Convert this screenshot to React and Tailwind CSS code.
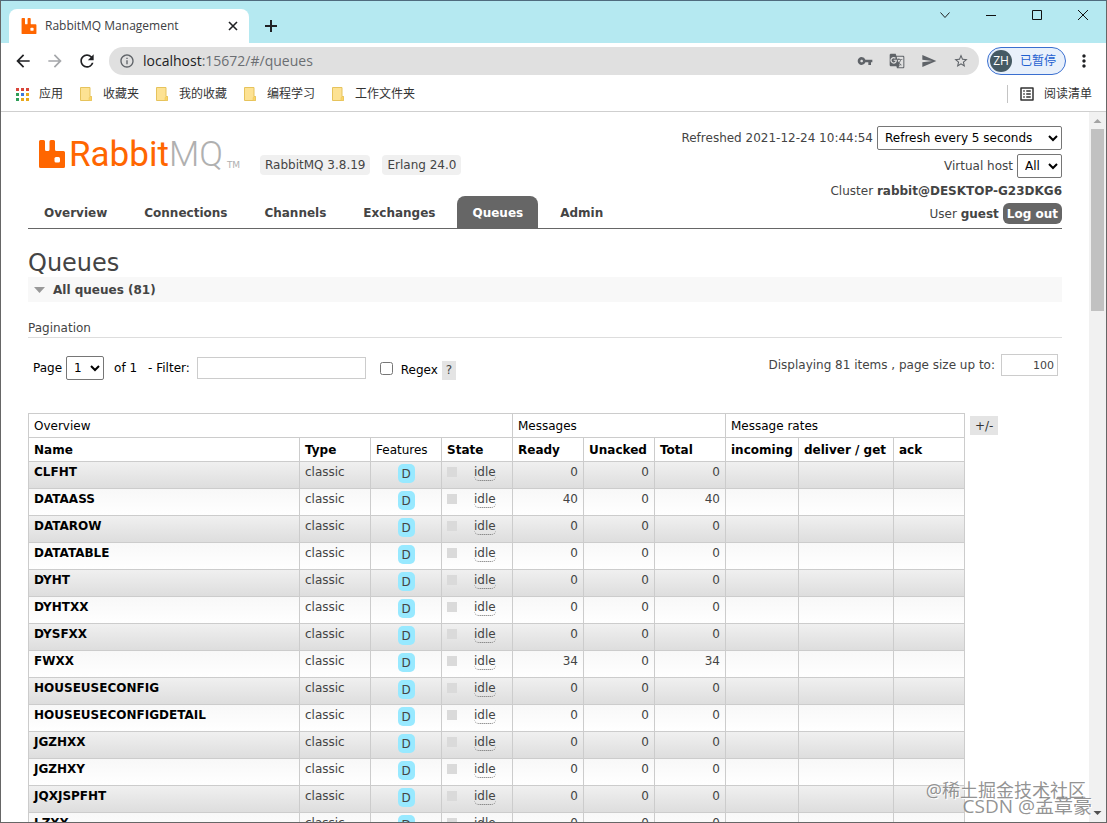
import React, { useState } from 'react';
import {
  MdArrowBack,
  MdArrowForward,
  MdGTranslate,
  MdInfoOutline,
  MdMoreVert,
  MdOutlineListAlt,
  MdRefresh,
  MdSend,
  MdStarBorder,
  MdVpnKey,
} from 'react-icons/md';

const bookmarks = ['收藏夹', '我的收藏', '编程学习', '工作文件夹'];

const navItems = ['Overview', 'Connections', 'Channels', 'Exchanges', 'Queues', 'Admin'];

const queues = [
  { name: 'CLFHT', ready: 0, unacked: 0 },
  { name: 'DATAASS', ready: 40, unacked: 0 },
  { name: 'DATAROW', ready: 0, unacked: 0 },
  { name: 'DATATABLE', ready: 0, unacked: 0 },
  { name: 'DYHT', ready: 0, unacked: 0 },
  { name: 'DYHTXX', ready: 0, unacked: 0 },
  { name: 'DYSFXX', ready: 0, unacked: 0 },
  { name: 'FWXX', ready: 34, unacked: 0 },
  { name: 'HOUSEUSECONFIG', ready: 0, unacked: 0 },
  { name: 'HOUSEUSECONFIGDETAIL', ready: 0, unacked: 0 },
  { name: 'JGZHXX', ready: 0, unacked: 0 },
  { name: 'JGZHXY', ready: 0, unacked: 0 },
  { name: 'JQXJSPFHT', ready: 0, unacked: 0 },
  { name: 'LZXX', ready: 0, unacked: 0 },
];

const appColors = [
  '#d9453a', '#d9453a', '#d9453a',
  '#2f9e58', '#3b78e0', '#e8a81c',
  '#2f9e58', '#e8a81c', '#e8a81c',
];

const RabbitMark = ({ className }) => (
  <svg viewBox="0 0 26 28" className={className} aria-hidden="true">
    <path
      d="M1.5 0h3Q6 0 6 1.500V9.500Q6 11 7.500 11H9Q10.500 11 10.500 9.500V1.500Q10.500 0 12 0h2.500Q16 0 16 1.500V9.500Q16 11 17.500 11H24.500Q26 11 26 12.500V26.500Q26 28 24.500 28H1.500Q0 28 0 26.500V1.500Q0 0 1.500 0Z"
      fill="#ff6600"
    />
    <rect x="15.500" y="17" width="5.500" height="5.500" rx="1.500" fill="#fff" />
  </svg>
);

const Folder = () => (
  <svg viewBox="0 0 12 14" className="w-3 h-3.5" aria-hidden="true">
    <path d="M0.500 0.500H10V9.500H11.500V13.500H0.500Z" fill="#fde293" stroke="#e6c35c" />
    <path d="M9 13.500V10.500L10.500 9.500H11.500V13.500Z" fill="#fbd565" stroke="#e6c35c" strokeWidth="0.500" />
  </svg>
);

const TabStrip = () => (
  <div className="flex h-[42px] shrink-0 justify-between bg-[#b5e9f1]">
    <div className="flex items-end pl-2">
      <div className="flex h-[34px] w-60 items-center rounded-t-lg bg-white pl-3 pr-[9px]">
        <RabbitMark className="h-4 w-4" />
        <span className="ml-2 flex-1 text-xs text-[#3c4043]">RabbitMQ Management</span>
        <button aria-label="Close tab" className="p-0.5">
          <svg viewBox="0 0 10 10" className="h-2.5 w-2.5" stroke="#202124" strokeWidth="1.6">
            <path d="M1 1L9 9M9 1L1 9" />
          </svg>
        </button>
      </div>
      <button aria-label="New tab" className="mb-[11px] ml-4">
        <svg viewBox="0 0 12 12" className="h-3 w-3" stroke="#202124" strokeWidth="2">
          <path d="M6 0V12M0 6H12" />
        </svg>
      </button>
    </div>
    <div className="flex h-7 items-center gap-9 pr-[18px]">
      <button aria-label="Search tabs">
        <svg viewBox="0 0 10 10" className="h-2.5 w-2.5" fill="none" stroke="#222">
          <path d="M0.500 2.500L5 7.500L9.500 2.500" />
        </svg>
      </button>
      <button aria-label="Minimize">
        <svg viewBox="0 0 10 10" className="h-2.5 w-2.5" stroke="#111">
          <path d="M0 5.500H10" />
        </svg>
      </button>
      <button aria-label="Maximize">
        <svg viewBox="0 0 10 10" className="h-2.5 w-2.5" fill="none" stroke="#111">
          <path d="M0.500 0.500H9.500V9.500H0.500Z" />
        </svg>
      </button>
      <button aria-label="Close">
        <svg viewBox="0 0 10 10" className="h-2.5 w-2.5" stroke="#111">
          <path d="M0 0L10 10M10 0L0 10" />
        </svg>
      </button>
    </div>
  </div>
);

const Toolbar = () => (
  <div className="flex h-9 shrink-0 items-center bg-white px-3 text-[#202124]">
    <button aria-label="Back"><MdArrowBack size={20} /></button>
    <button aria-label="Forward" className="ml-3 text-[#a5a7aa]"><MdArrowForward size={20} /></button>
    <button aria-label="Reload" className="ml-3"><MdRefresh size={20} /></button>
    <div className="ml-3 flex h-7 flex-1 items-center rounded-full bg-[#e0e0e0] px-2.5 text-[#5f6368]">
      <MdInfoOutline size={16} />
      <div className="ml-2 flex-1 text-sm text-[#6b6e72]">
        <span className="text-[#202124]">localhost</span>:15672/#/queues
      </div>
      <div className="flex gap-4">
        <button aria-label="Passwords"><MdVpnKey size={16} /></button>
        <button aria-label="Translate"><MdGTranslate size={16} /></button>
        <button aria-label="Send"><MdSend size={16} /></button>
        <button aria-label="Bookmark"><MdStarBorder size={16} /></button>
      </div>
    </div>
    <button className="ml-2 flex h-7 w-[79px] items-center gap-2 rounded-full border border-[#3a6fd0] bg-[#e8f0fb] pl-0.5 text-xs text-[#1f5fd0]">
      <span className="flex h-[22px] w-[22px] items-center justify-center rounded-full bg-[#455a64] text-white">
        ZH
      </span>
      已暂停
    </button>
    <button aria-label="Menu" className="ml-2"><MdMoreVert size={20} /></button>
  </div>
);

const BookmarksBar = () => (
  <div className="flex h-[33px] shrink-0 items-center border-b border-[#cfcfcf] bg-white pb-0.5 pl-[15px] pr-3.5 text-xs text-[#333]">
    <a href="#apps" className="flex items-center gap-2.5">
      <svg viewBox="0 0 13 13" className="h-[13px] w-[13px]" aria-hidden="true">
        {appColors.map((color, i) => (
          <rect key={i} x={(i % 3) * 5} y={Math.floor(i / 3) * 5} width="3" height="3" fill={color} />
        ))}
      </svg>
      应用
    </a>
    {bookmarks.map((name) => (
      <a key={name} href="#bookmark" className="ml-[17px] flex items-center gap-[11px]">
        <Folder />
        {name}
      </a>
    ))}
    <button className="ml-auto flex items-center gap-2 border-l border-[#c4c4c4] pl-2.5">
      <MdOutlineListAlt size={18} />
      阅读清单
    </button>
  </div>
);

const Logo = () => (
  <div className="flex h-8 items-end font-['Roboto',sans-serif] text-[35px] leading-8">
    <RabbitMark className="mb-[3px] h-7 w-[26px]" />
    <span className="ml-1 text-[#ff6600]">Rabbit</span>
    <span className="font-light text-[#b0b0b0]">MQ</span>
    <span className="ml-1 font-['DejaVu_Sans',sans-serif] text-[9px] leading-3 text-[#b0b0b0]">TM</span>
  </div>
);

const Header = () => (
  <header className="border-b border-[#666]">
    <div className="flex items-start justify-between">
      <div>
        <div className="flex items-end pl-[11px] pt-[27px]">
          <div className="w-[206px]">
            <Logo />
          </div>
          <span className="mb-[-4px] ml-[15px] rounded bg-[#f0f0f0] px-[5px] py-0.5 leading-4">RabbitMQ 3.8.19</span>
          <span className="mb-[-4px] ml-3 rounded bg-[#f0f0f0] px-[5px] py-0.5 leading-4">Erlang 24.0</span>
        </div>
        <nav className="mt-[25px] flex gap-[7px] pl-px font-bold">
          {navItems.map((item) => (
            <a
              key={item}
              href={`#/${item.toLowerCase()}`}
              className={
                item === 'Queues'
                  ? 'rounded-t-lg bg-[#666] px-[15px] pb-[7px] pt-[9px] leading-4 text-white'
                  : 'px-[15px] pb-[7px] pt-[9px] leading-4'
              }
            >
              {item}
            </a>
          ))}
        </nav>
      </div>
      <div className="flex flex-col items-end gap-1 pt-3.5">
        <div className="flex items-center gap-1">
          <label htmlFor="refresh">Refreshed 2021-12-24 10:44:54</label>
          <select id="refresh" className="h-6 w-[185px] rounded-xs border border-[#767676] bg-white pl-[3px] text-black">
            <option>Refresh every 5 seconds</option>
            <option>Refresh every 30 seconds</option>
            <option>Do not refresh</option>
          </select>
        </div>
        <div className="flex items-center gap-1">
          <label htmlFor="vhost">Virtual host</label>
          <select id="vhost" className="h-6 w-[45px] rounded-xs border border-[#767676] bg-white pl-[3px] text-black">
            <option>All</option>
            <option>/</option>
          </select>
        </div>
        <div className="pt-px leading-4">Cluster <b>rabbit@DESKTOP-G23DKG6</b></div>
        <div className="flex items-center gap-1">
          <span>User <b>guest</b></span>
          <button className="h-[21px] rounded-md bg-[#666] px-1 font-bold text-white">Log out</button>
        </div>
      </div>
    </div>
  </header>
);

const Pagination = () => {
  const [filter, setFilter] = useState('');
  const [regex, setRegex] = useState(false);

  return (
    <div className="flex justify-between pl-[5px] pr-1 pt-4 text-black">
      <div className="flex h-[26px] items-center pt-0.5">
        <label htmlFor="page">Page</label>
        <select id="page" className="ml-1 h-6 w-[38px] rounded-xs border border-[#767676] bg-white pl-[3px]">
          <option>1</option>
        </select>
        <span className="ml-2.5">of 1</span>
        <label htmlFor="filter" className="ml-[11px]">- Filter:</label>
        <input
          id="filter"
          type="text"
          value={filter}
          onChange={(e) => setFilter(e.target.value)}
          className="ml-[7px] h-[22px] w-[169px] border border-[#ccc] px-1"
        />
        <input
          id="regex"
          type="checkbox"
          checked={regex}
          onChange={(e) => setRegex(e.target.checked)}
          className="ml-3.5 h-[13px] w-[13px]"
        />
        <label htmlFor="regex" className="ml-2 pt-1">Regex</label>
        <button className="ml-1 mt-1 h-[19px] bg-[#e4e4e4] px-1 text-[#444]">?</button>
      </div>
      <div className="flex h-[22px] items-center gap-1.5 text-[#444]">
        <label htmlFor="pagesize">Displaying 81 items , page size up to:</label>
        <input
          id="pagesize"
          type="text"
          defaultValue="100"
          className="h-[22px] w-[57px] border border-[#ccc] px-[3px] text-right text-[11px]"
        />
      </div>
    </div>
  );
};

const QueueRow = ({ queue, shaded }) => {
  const cell = 'border border-[#ccc] px-[5px] pt-0.5 align-top leading-4';
  return (
    <tr className={shaded ? 'h-[27px] bg-linear-to-b from-[#f0f0f0] to-[#dddddd]' : 'h-[27px] bg-linear-to-b from-[#f8f8f8] to-white'}>
      <td className={cell}>
        <a href={`#/queues/%2F/${queue.name}`} className="font-bold text-black">{queue.name}</a>
      </td>
      <td className={cell}>classic</td>
      <td className="border border-[#ccc] pt-0.5 text-center align-top">
        <abbr title="durable: true" className="inline-block h-[19px] w-[17px] rounded-[5px] bg-[#98e9ff] leading-5 no-underline">D</abbr>
      </td>
      <td className={cell}>
        <div className="flex items-start">
          <span className="mt-[3px] h-2.5 w-2.5 bg-[#dadada]" />
          <span className="ml-[17px] rounded-[5px] border-b border-dotted border-[#666] leading-4">idle</span>
        </div>
      </td>
      <td className={`${cell} text-right`}>{queue.ready}</td>
      <td className={`${cell} text-right`}>{queue.unacked}</td>
      <td className={`${cell} text-right`}>{queue.ready + queue.unacked}</td>
      <td className={cell} />
      <td className={cell} />
      <td className={cell} />
    </tr>
  );
};

const QueueTable = () => {
  const head = 'border border-[#ccc] px-[5px] text-left';
  return (
    <div className="mt-[33px] flex items-start">
      <table className="table-fixed border-collapse">
        <colgroup>
          <col className="w-[271px]" />
          <col className="w-[71px]" />
          <col className="w-[71px]" />
          <col className="w-[71px]" />
          <col className="w-[71px]" />
          <col className="w-[71px]" />
          <col className="w-[71px]" />
          <col className="w-[73px]" />
          <col className="w-[95px]" />
          <col className="w-[71px]" />
        </colgroup>
        <thead className="text-black">
          <tr className="h-6">
            <th colSpan={4} className={`${head} font-normal`}>Overview</th>
            <th colSpan={3} className={`${head} font-normal`}>Messages</th>
            <th colSpan={3} className={`${head} font-normal`}>Message rates</th>
          </tr>
          <tr className="h-6 whitespace-nowrap">
            <th className={head}>Name</th>
            <th className={head}>Type</th>
            <th className={`${head} font-normal`}>Features</th>
            <th className={head}>State</th>
            <th className={head}>Ready</th>
            <th className={head}>Unacked</th>
            <th className={head}>Total</th>
            <th className={head}>incoming</th>
            <th className={head}>deliver / get</th>
            <th className={head}>ack</th>
          </tr>
        </thead>
        <tbody>
          {queues.map((queue, i) => (
            <QueueRow key={queue.name} queue={queue} shaded={i % 2 === 0} />
          ))}
        </tbody>
      </table>
      <button className="ml-[5px] mt-[3px] h-[19px] bg-[#e4e4e4] px-[5px] text-[#333]">+/-</button>
    </div>
  );
};

const Scrollbar = () => (
  <div className="flex w-[17px] shrink-0 flex-col items-center justify-between bg-[#f1f1f1]">
    <div className="flex flex-col items-center">
      <svg viewBox="0 0 17 17" className="h-[17px] w-[17px]" aria-hidden="true">
        <path d="M4.500 11L8.500 7L12.500 11Z" fill="#a3a3a3" />
      </svg>
      <div className="h-[182px] w-[13px] bg-[#c1c1c1]" />
    </div>
    <svg viewBox="0 0 17 17" className="h-[17px] w-[17px]" aria-hidden="true">
      <path d="M4.500 6L8.500 10L12.500 6Z" fill="#505050" />
    </svg>
  </div>
);

const App = () => {
  return (
    <div className="relative flex h-screen flex-col overflow-hidden border border-[#666] border-t-[#4f6b7e] bg-white font-['Open_Sans','Noto_Sans_CJK_SC',sans-serif]">
      <TabStrip />
      <Toolbar />
      <BookmarksBar />
      <div className="flex min-h-0 flex-1">
        <main className="min-w-0 flex-1 overflow-hidden px-[27px] font-['DejaVu_Sans',sans-serif] text-xs text-[#444]">
          <Header />
          <h1 className="mt-5 text-2xl leading-7">Queues</h1>
          <h2 className="flex h-[25px] items-center gap-2 bg-[#f8f8f8] pl-1.5 font-bold">
            <svg viewBox="0 0 11 6" className="h-1.5 w-[11px]" aria-hidden="true">
              <path d="M0 0H11L5.500 6Z" fill="#999" />
            </svg>
            All queues (81)
          </h2>
          <h3 className="mt-[18px] border-b border-[#ddd] leading-[17px]">Pagination</h3>
          <Pagination />
          <QueueTable />
        </main>
        <Scrollbar />
      </div>
      <div className="pointer-events-none absolute bottom-5 right-5 text-lg leading-6 text-[#777]/80 [text-shadow:1px_1px_0_#fff]">
        @稀土掘金技术社区
      </div>
      <div className="pointer-events-none absolute bottom-1 right-3.5 text-[19px] leading-6 text-[#777]/80 [text-shadow:1px_1px_0_#fff]">
        CSDN @孟章豪
      </div>
    </div>
  );
};

export default App;
